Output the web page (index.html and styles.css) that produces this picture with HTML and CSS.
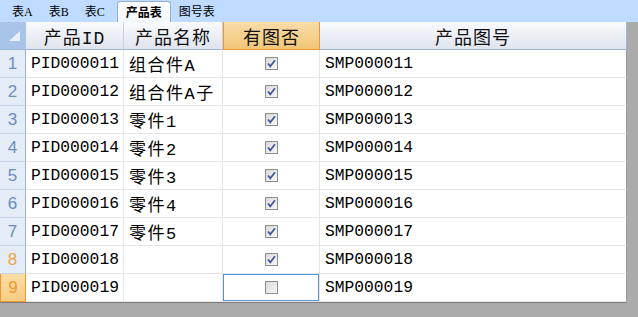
FILE: index.html
```html
<!DOCTYPE html>
<html lang="zh-CN">

<head>
  <meta charset="UTF-8" />
  <title>产品表</title>
  <link rel="stylesheet" href="styles.css">
</head>

<body>
  <div class="tabs">
    <span class="tab">表A</span>
    <span class="tab">表B</span>
    <span class="tab">表C</span>
    <span class="tab ativo">产品表</span>
    <span class="tab">图号表</span>
  </div>

  <div class="planilha">
    <div class="cabecalho">
      <div class="canto"><span class="canto-marca"></span></div>
      <div class="titulo">产品ID</div>
      <div class="titulo">产品名称</div>
      <div class="titulo selecionado">有图否</div>
      <div class="titulo ultimo">产品图号</div>
    </div>

    <div class="linha">
      <div class="num">1</div>
      <div class="cel">PID000011</div>
      <div class="cel nome">组合件A</div>
      <div class="cel caixa"><span class="check marcado"><svg viewBox="0 0 11 11"><path d="M2 5.5 L4.3 8.3 L9 2.3" /></svg></span></div>
      <div class="cel ultimo">SMP000011</div>
    </div>
    <div class="linha">
      <div class="num">2</div>
      <div class="cel">PID000012</div>
      <div class="cel nome">组合件A子</div>
      <div class="cel caixa"><span class="check marcado"><svg viewBox="0 0 11 11"><path d="M2 5.5 L4.3 8.3 L9 2.3" /></svg></span></div>
      <div class="cel ultimo">SMP000012</div>
    </div>
    <div class="linha">
      <div class="num">3</div>
      <div class="cel">PID000013</div>
      <div class="cel nome">零件1</div>
      <div class="cel caixa"><span class="check marcado"><svg viewBox="0 0 11 11"><path d="M2 5.5 L4.3 8.3 L9 2.3" /></svg></span></div>
      <div class="cel ultimo">SMP000013</div>
    </div>
    <div class="linha">
      <div class="num">4</div>
      <div class="cel">PID000014</div>
      <div class="cel nome">零件2</div>
      <div class="cel caixa"><span class="check marcado"><svg viewBox="0 0 11 11"><path d="M2 5.5 L4.3 8.3 L9 2.3" /></svg></span></div>
      <div class="cel ultimo">SMP000014</div>
    </div>
    <div class="linha">
      <div class="num">5</div>
      <div class="cel">PID000015</div>
      <div class="cel nome">零件3</div>
      <div class="cel caixa"><span class="check marcado"><svg viewBox="0 0 11 11"><path d="M2 5.5 L4.3 8.3 L9 2.3" /></svg></span></div>
      <div class="cel ultimo">SMP000015</div>
    </div>
    <div class="linha">
      <div class="num">6</div>
      <div class="cel">PID000016</div>
      <div class="cel nome">零件4</div>
      <div class="cel caixa"><span class="check marcado"><svg viewBox="0 0 11 11"><path d="M2 5.5 L4.3 8.3 L9 2.3" /></svg></span></div>
      <div class="cel ultimo">SMP000016</div>
    </div>
    <div class="linha">
      <div class="num">7</div>
      <div class="cel">PID000017</div>
      <div class="cel nome">零件5</div>
      <div class="cel caixa"><span class="check marcado"><svg viewBox="0 0 11 11"><path d="M2 5.5 L4.3 8.3 L9 2.3" /></svg></span></div>
      <div class="cel ultimo">SMP000017</div>
    </div>
    <div class="linha">
      <div class="num realce">8</div>
      <div class="cel">PID000018</div>
      <div class="cel nome"></div>
      <div class="cel caixa"><span class="check marcado"><svg viewBox="0 0 11 11"><path d="M2 5.5 L4.3 8.3 L9 2.3" /></svg></span></div>
      <div class="cel ultimo">SMP000018</div>
    </div>
    <div class="linha">
      <div class="num atual">9</div>
      <div class="cel">PID000019</div>
      <div class="cel nome"></div>
      <div class="cel caixa ativa"><span class="check"></span></div>
      <div class="cel ultimo">SMP000019</div>
    </div>
  </div>
</body>

</html>
```

FILE: styles.css
```css
body,
html {
  margin: 0;
  padding: 0;
  height: 100%;
  background-color: #ababab;
  font-family: "Liberation Mono", "Noto Sans CJK SC", monospace;
  color: #000;
  overflow: hidden;
}

.tabs {
  display: flex;
  align-items: flex-end;
  height: 22px;
  padding-left: 4px;
  background-color: #bfdbff;
  font-family: "Liberation Serif", "Noto Sans CJK SC", serif;
  font-size: 12px;
}

.tab {
  display: flex;
  align-items: center;
  height: 21px;
  padding: 0 8px;
  box-sizing: border-box;
  padding-bottom: 1px;
}

.tab.ativo {
  margin-left: 4px;
  background: linear-gradient(#ffffff, #f3f7fd);
  border: 1px solid #8fb0d8;
  border-bottom: none;
  border-radius: 3px 3px 0 0;
  font-family: "Noto Sans CJK SC", sans-serif;
  font-weight: bold;
}

.planilha {
  width: 627px;
  background-color: #fff;
  border-bottom: 1px solid #7c7c7c;
}

.cabecalho,
.linha {
  display: grid;
  grid-template-columns: 26px 98px 99px 97px 307px;
  height: 28px;
}

.cabecalho > div,
.linha > div {
  box-sizing: border-box;
  display: flex;
  align-items: center;
}

/* cabeçalho das colunas */

.canto {
  background-color: #a9c4e9;
  border-bottom: 1px solid #9eb6ce;
  justify-content: flex-end;
  align-items: flex-end !important;
  padding: 0 6px 8px 0;
}

.canto-marca {
  width: 0;
  height: 0;
  border-left: 11px solid transparent;
  border-bottom: 10px solid #e9f0fa;
}

.titulo {
  justify-content: center;
  font-size: 18px;
  letter-spacing: 1px;
  background: linear-gradient(#f9fafd, #dfe4ee);
  border-right: 1px solid #c5d2e3;
  border-bottom: 1px solid #9eb6ce;
  color: #111;
}

.titulo.selecionado {
  background: linear-gradient(#f9dcaa, #f3c676);
  border: 1px solid #f29536;
  border-top: none;
}

.titulo.ultimo {
  border-right: 1px solid #9eb6ce;
}

/* linhas */

.num {
  justify-content: center;
  font-family: "Liberation Sans", sans-serif;
  font-size: 17px;
  color: #6b8cbf;
  background-color: #e4ecf7;
  border-right: 1px solid #9eb6ce;
  border-bottom: 1px solid #c6d5e8;
}

.num.realce {
  color: #f3a43c;
}

.num.atual {
  color: #ec9a2c;
  background: linear-gradient(#fcdca6, #f8cd84);
  border: 1px solid #f29536;
  border-top: none;
}

.cel {
  padding-left: 5px;
  font-size: 16.3px;
  border-right: 1px solid #e6e6e6;
  border-bottom: 1px solid #e6e6e6;
}

.cel.nome {
  padding-left: 5px;
  font-size: 17px;
  letter-spacing: 1.5px;
}

.cel.ultimo {
  border-right: 1px solid #9a9a9a;
}

.cel.caixa {
  justify-content: center;
  padding-left: 0;
}

.cel.ativa {
  box-shadow: inset 0 0 0 1px #5a93d9;
}

.check {
  width: 13px;
  height: 13px;
  box-sizing: border-box;
  border: 1px solid #8e8e8e;
  background: linear-gradient(135deg, #d9d9d9, #f7f7f7);
  display: flex;
}

.check svg {
  width: 11px;
  height: 11px;
}

.check path {
  fill: none;
  stroke: #3f5597;
  stroke-width: 1.7;
}
```
